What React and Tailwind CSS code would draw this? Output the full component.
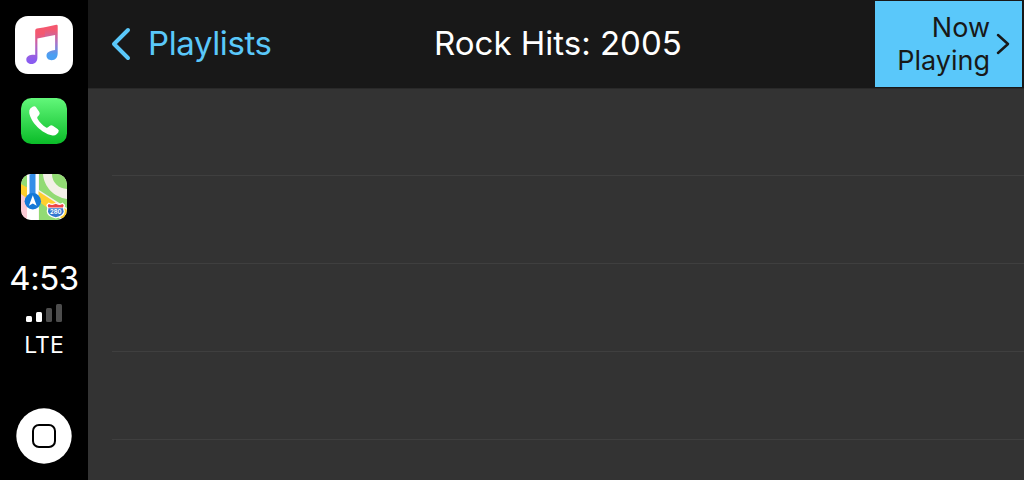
const ROWS = [1, 2, 3, 4];

function MusicIcon() {
  return (
    <svg viewBox="0 0 58 58" className="h-[58px] w-[58px]" aria-label="Music">
      <defs>
        <linearGradient id="noteLeft" x1="0" y1="10" x2="0" y2="48" gradientUnits="userSpaceOnUse">
          <stop offset="0.2" stopColor="#f4586f" />
          <stop offset="0.55" stopColor="#b565c0" />
          <stop offset="0.9" stopColor="#8a5cf0" />
        </linearGradient>
        <linearGradient id="noteRight" x1="0" y1="10" x2="0" y2="44" gradientUnits="userSpaceOnUse">
          <stop offset="0.1" stopColor="#f4586f" />
          <stop offset="0.5" stopColor="#a874c8" />
          <stop offset="0.85" stopColor="#4a9ff2" />
        </linearGradient>
      </defs>
      <rect width="58" height="58" rx="13" fill="#fff" />
      <path
        d="M20.2 14.5 V39 C18 38.3 11.3 38.8 11.3 43.6 C11.3 46.5 13.7 48.1 16.4 48.1 C20.2 48.1 22.4 45.4 22.4 41.5 V22.5 L30 21 V11.2 L21.8 12.6 Q20.2 13 20.2 14.5Z"
        fill="url(#noteLeft)"
      />
      <path
        d="M29.8 11.2 L41.3 8.8 Q42.7 8.6 42.7 10 V37 C42.7 41.3 40.6 44.2 36.5 44.2 C33.7 44.2 31.5 42.5 31.5 39.8 C31.5 35.2 36.5 34.8 40.1 34 V19 L29.8 21.1Z"
        fill="url(#noteRight)"
      />
    </svg>
  );
}

function PhoneIcon() {
  return (
    <svg viewBox="0 0 46 46" className="h-[46px] w-[46px]" aria-label="Phone">
      <defs>
        <linearGradient id="phoneBg" x1="0" y1="0" x2="0" y2="1">
          <stop offset="0" stopColor="#62f77a" />
          <stop offset="1" stopColor="#0abc28" />
        </linearGradient>
      </defs>
      <rect width="46" height="46" rx="10.5" fill="url(#phoneBg)" />
      <path
        d="M9.3 10.6 L11.6 8.8 Q13.7 7.5 15.2 9.5 L18.3 14 Q19.3 15.8 17.9 17.2 L16.5 18.7 Q15.9 19.6 16.5 20.7 C18.4 24 21.5 27.2 25.1 29.4 Q26.1 30 27 29.3 L28.6 27.9 Q30.2 26.8 31.8 27.8 L36.6 31 Q38.6 32.5 37.3 34.4 L35.6 36.3 Q33.7 38 30.6 37.3 C21 35.4 9.8 24.3 8.3 15 Q7.9 12.1 9.3 10.6Z"
        fill="#fff"
      />
    </svg>
  );
}

function MapsIcon() {
  return (
    <svg viewBox="0 0 46 46" className="h-[46px] w-[46px]" aria-label="Maps">
      <defs>
        <clipPath id="mapsClip">
          <rect width="46" height="46" rx="10.5" />
        </clipPath>
      </defs>
      <g clipPath="url(#mapsClip)">
        <rect width="46" height="46" fill="#f3f0e7" />
        <path d="M0 0H6V14L0 11Z" fill="#92db74" />
        <path d="M0 19L7 23V46H0Z" fill="#fbcbd5" />
        <path d="M18 0H22C23 13 33 23 46 25V34L18 16Z" fill="#92db74" />
        <path d="M18 24L40 46H18Z" fill="#92db74" />
        <circle cx="46" cy="0" r="15" fill="#92db74" />
        <path d="M0 10L7 14V25L0 20Z" fill="#ffcf2e" />
        <path d="M17 17L46 36V46H43L17 27Z" fill="#ffcf2e" />
        <rect x="6" width="11.5" height="46" fill="#fff" />
        <rect x="8.5" width="6" height="22" fill="#348ee8" />
        <circle cx="11.8" cy="27.3" r="8.2" fill="#1479d8" />
        <path d="M11.8 21.2L15.7 31.8L11.8 29.4L7.9 31.8Z" fill="#fff" />
        <path
          d="M27.7 28.5Q31.5 31 34.7 28.4Q38 31 41.6 28.5L44.2 31Q42.4 34 43.9 37.3Q43.8 42.5 34.8 44.4Q25.8 42.5 25.7 37.3Q27.1 34 25.2 31Z"
          fill="#fff"
        />
        <path
          d="M27.9 30Q31.5 32 34.7 29.8Q38 32 41.4 30L42.7 31.3L42 33.5H27.4L26.7 31.3Z"
          fill="#ed4547"
        />
        <path d="M27.3 34.2H42.1Q42 35.8 42.7 37.5Q42.1 41.5 34.8 43.2Q27.5 41.5 26.9 37.5Q27.5 35.8 27.3 34.2Z" fill="#3478cf" />
        <text
          x="34.8"
          y="40"
          textAnchor="middle"
          textLength="11.5"
          lengthAdjust="spacingAndGlyphs"
          fill="#fff"
          fontSize="6.5"
          fontWeight="700"
        >
          280
        </text>
      </g>
    </svg>
  );
}

function SignalBars() {
  return (
    <div className="flex h-[18px] items-end gap-1">
      <span className="h-1.5 w-1.5 rounded-[1.5px] bg-white" />
      <span className="h-2.5 w-1.5 rounded-[1.5px] bg-white" />
      <span className="h-3.5 w-1.5 rounded-[1.5px] bg-[#4d4d4d]" />
      <span className="h-[18px] w-1.5 rounded-[1.5px] bg-[#4d4d4d]" />
    </div>
  );
}

function Sidebar() {
  return (
    <aside className="flex w-[88px] shrink-0 flex-col items-center bg-black pt-4 text-white">
      <MusicIcon />
      <div className="mt-6">
        <PhoneIcon />
      </div>
      <div className="mt-[30px]">
        <MapsIcon />
      </div>
      <div className="mt-10 text-[33px] leading-9 tracking-[-0.5px]">4:53</div>
      <div className="mt-2">
        <SignalBars />
      </div>
      <div className="mt-2 text-[23px] leading-[30px]">LTE</div>
      <button type="button" aria-label="Home" className="mt-12">
        <svg viewBox="0 0 56 56" className="h-14 w-14">
          <circle cx="28" cy="28" r="27.7" fill="#fff" />
          <rect x="17" y="17" width="22" height="22" rx="6" fill="none" stroke="#000" strokeWidth="2" />
        </svg>
      </button>
    </aside>
  );
}

function Header() {
  return (
    <header className="grid h-[89px] shrink-0 grid-cols-[287px_1fr_149px] border-b border-[#292929] bg-[#181818]">
      <button type="button" className="flex items-center pl-[22px] text-[33px] tracking-[-0.4px] text-[#5ac8fa]">
        <svg viewBox="0 0 24 36" className="mr-[14px] h-9 w-6" fill="none" stroke="currentColor" strokeWidth="4" strokeLinecap="round" strokeLinejoin="round">
          <path d="M18 4L4 18L18 32" />
        </svg>
        Playlists
      </button>
      <h1 className="flex items-center pl-[59px] text-[33px] whitespace-nowrap text-white">
        Rock Hits: 2005
      </h1>
      <div className="py-px pr-0.5">
        <button type="button" className="flex h-[86px] w-full items-center justify-end bg-[#5ac8fa] pr-3 text-right text-[27px] leading-[33px] text-[#181818]">
          <span>
            Now
            <br />
            Playing
          </span>
          <svg viewBox="0 0 14 22" className="ml-1.5 h-[22px] w-3.5" fill="none" stroke="currentColor" strokeWidth="2.5" strokeLinecap="round" strokeLinejoin="round">
            <path d="M2 2L12 11L2 20" />
          </svg>
        </button>
      </div>
    </header>
  );
}

export default function App() {
  return (
    <div className="flex h-[480px] w-[1024px] overflow-hidden bg-[#333333] font-['Inter',sans-serif]">
      <Sidebar />
      <main className="flex min-w-0 flex-1 flex-col">
        <Header />
        {/* Empty track rows */}
        <ul className="-mt-px flex flex-col pl-6">
          {ROWS.map((row) => (
            <li key={row} className="h-[88px] border-b border-[#3f3f3f]" />
          ))}
        </ul>
      </main>
    </div>
  );
}
